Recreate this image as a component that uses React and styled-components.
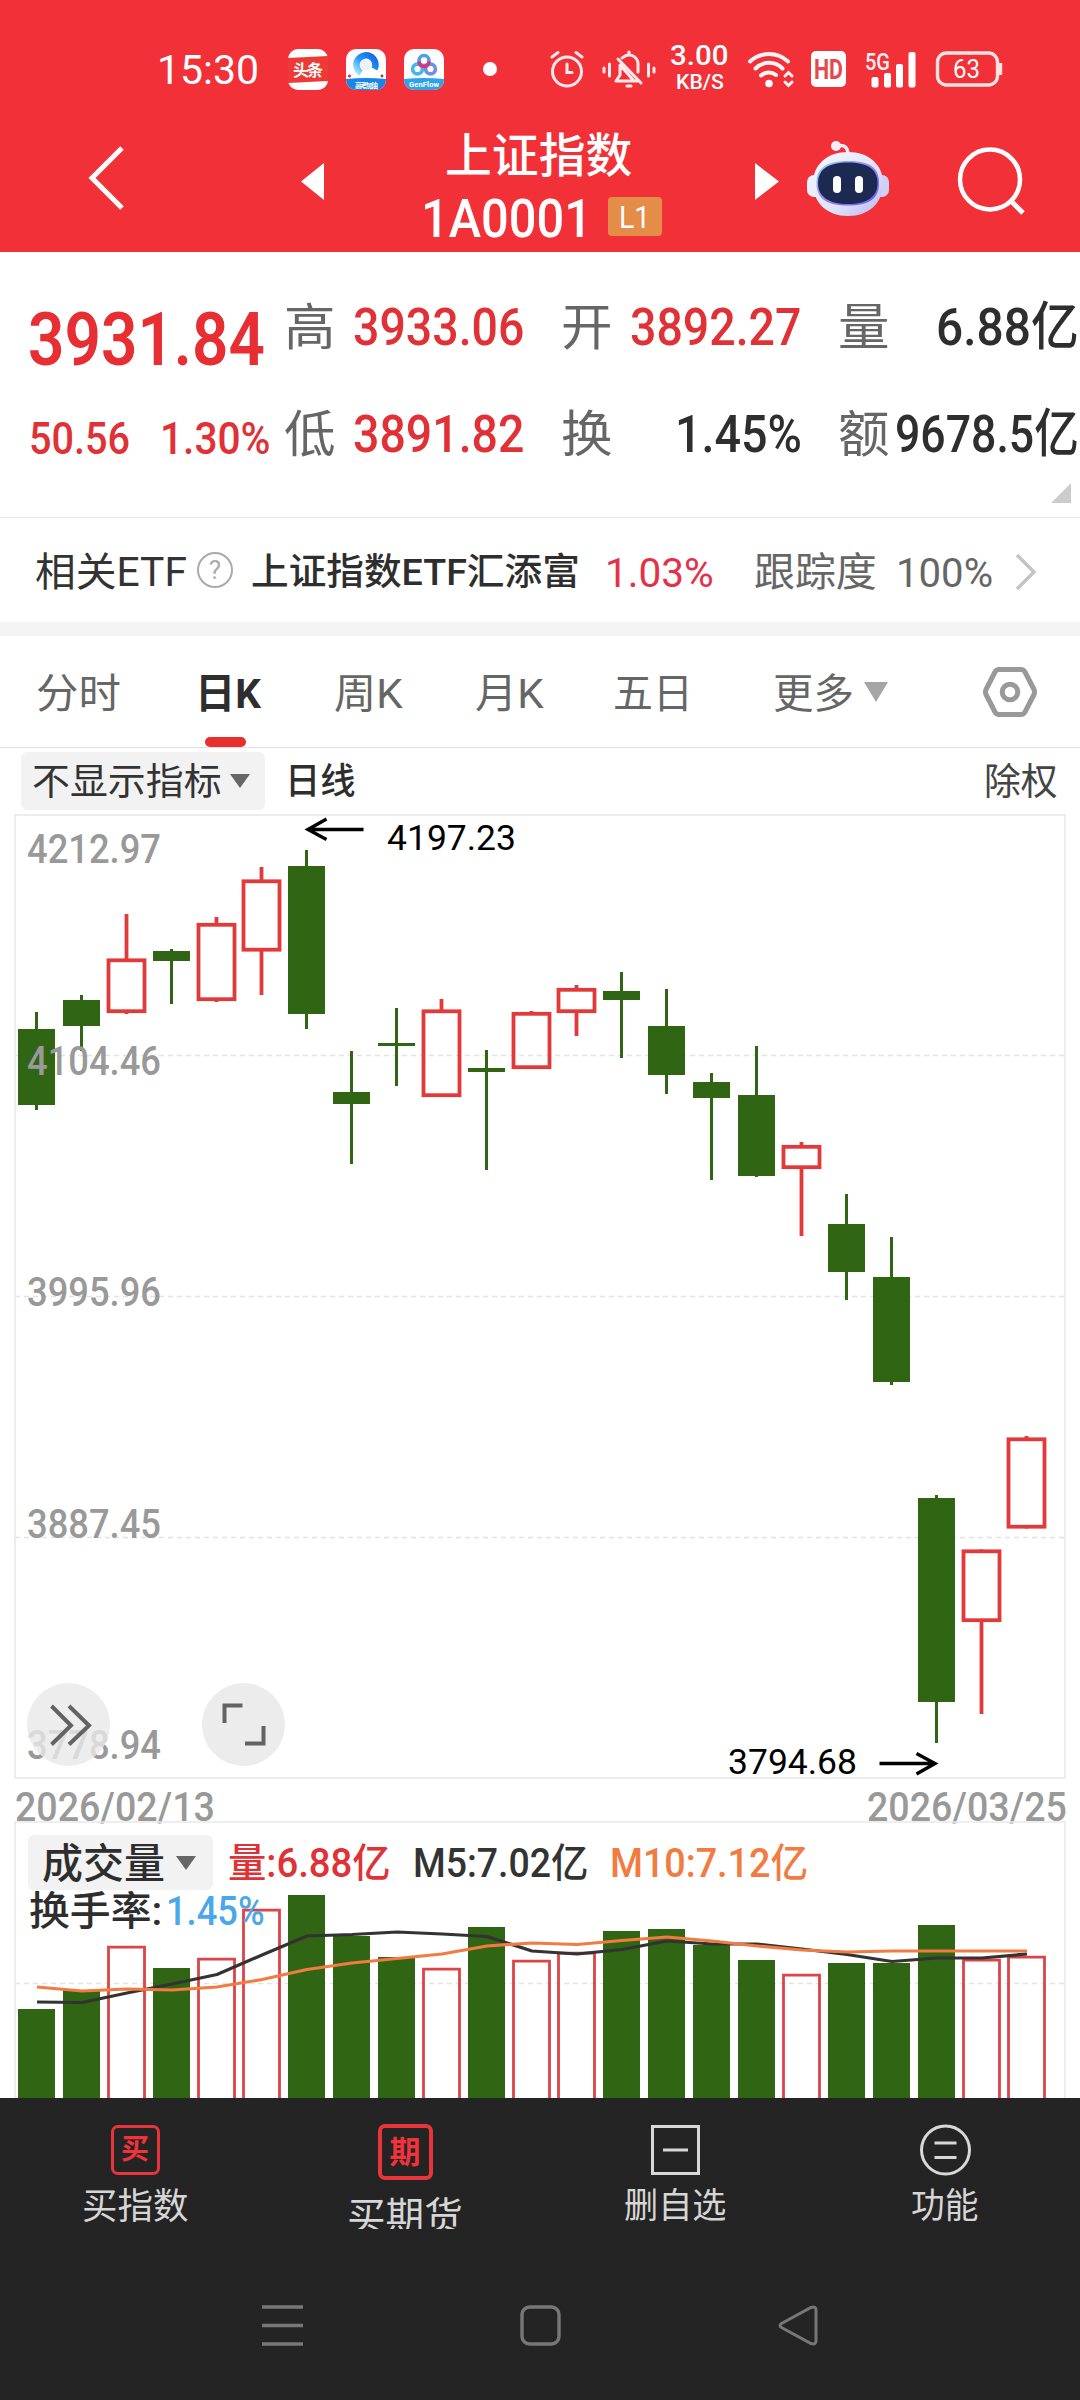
import { useLayoutEffect, useRef, useState } from 'react'
import styled, { createGlobalStyle } from 'styled-components'

const RED = '#e03236'
const GREEN = '#306613'
const FONT = `Roboto, "Noto Sans CJK SC", sans-serif`

const GlobalStyle = createGlobalStyle`
  * { box-sizing: border-box; }
  body {
    margin: 0;
    background: #fff;
    font-family: ${FONT};
  }
  svg { display: block; flex: none; overflow: visible; }
`

const Page = styled.div`
  width: 1080px;
  height: 2400px;
  display: flex;
  flex-direction: column;
  overflow: hidden;
  background: #fff;
`

// ---------- text that is squeezed to a given width ----------

const FitBox = styled.span`
  display: block;
  flex: none;
  width: ${p => p.$w}px;
  margin-left: ${p => p.$ml || 0}px;
  color: ${p => p.$color || 'inherit'};
  font-size: ${p => p.$size}px;
  font-weight: ${p => p.$weight || 400};
  line-height: 1;
  white-space: nowrap;
`

const FitInner = styled.span`
  display: inline-block;
  margin-left: -0.035em;
  padding-top: 0.08em;
  transform-origin: 0 50%;
`

const Fit = ({ w, size, ml, color, weight, children }) => {
    const ref = useRef(null)
    const [scale, setScale] = useState(1)

    useLayoutEffect(() => {
        setScale((w + size * 0.07) / ref.current.offsetWidth)
    }, [w, size, children])

    return (
        <FitBox $w={w} $size={size} $ml={ml} $color={color} $weight={weight}>
            <FitInner ref={ref} style={{ transform: `scaleX(${scale})` }}>{children}</FitInner>
        </FitBox>
    )
}

// ---------- header ----------

const Header = styled.header`
  height: 252px;
  background: #f23037;
  color: #fff;
`

const StatusBar = styled.div`
  display: flex;
  align-items: center;
  height: 120px;
  padding: 18px 0 0 158px;
`

const Slot = styled.div`
  flex: none;
  width: ${p => p.$w}px;
  margin-left: ${p => p.$ml || 0}px;
`

const Dot = styled.div`
  width: 14px;
  height: 14px;
  border-radius: 50%;
  background: #fff;
`

const Speed = styled.div`
  display: flex;
  flex-direction: column;
  margin-top: -4px;
`

const TitleBar = styled.div`
  display: flex;
  align-items: flex-start;
  height: 132px;
  padding-left: 88px;
`

const IconBox = styled.div`
  display: flex;
  align-items: center;
  height: ${p => p.$h || 116}px;
  margin-left: ${p => p.$ml || 0}px;
`

const TitleBlock = styled.div`
  width: 239px;
  margin-left: 99px;
  padding-top: 2px;
`

const TitleLine = styled.div`
  display: flex;
  align-items: center;
  height: 63px;
`

const LevelBadge = styled.div`
  display: flex;
  align-items: center;
  height: 39px;
  width: 54px;
  margin-left: 18px;
  padding-left: 12px;
  border-radius: 4px;
  background: #e38d48;
`

const NewsIcon = () => (
    <svg width="40" height="41" viewBox="0 0 40 41">
        <rect width="40" height="41" rx="10" fill="#fff" />
        <path d="M0 9L40 7V32L0 34Z" fill="#ee3a35" />
        <text x="5" y="27" fontSize="16" fontWeight="700" fill="#fff" textLength="30">头条</text>
    </svg>
)

const BrowserIcon = () => (
    <svg width="40" height="41" viewBox="0 0 40 41">
        <defs>
            <clipPath id="browser"><rect width="40" height="41" rx="10" /></clipPath>
            <linearGradient id="ring" x1="0" y1="1" x2="1" y2="0">
                <stop offset="0" stopColor="#a8e4ff" />
                <stop offset="0.5" stopColor="#2196f3" />
                <stop offset="1" stopColor="#1266e6" />
            </linearGradient>
        </defs>
        <g clipPath="url(#browser)">
            <rect width="40" height="41" fill="#fff" />
            <path d="M15 24A9.500 9.500 0 1 1 28.500 20" fill="none" stroke="url(#ring)" strokeWidth="6.500" />
            <circle cx="20" cy="16" r="5.500" fill="#eef1f5" />
            <circle cx="3.500" cy="27" r="1.600" fill="#d33" />
            <circle cx="36" cy="27" r="1.400" fill="#a33" />
            <path d="M0 30Q20 28 40 30V41H0Z" fill="#1a86e4" />
            <text x="9" y="38.500" fontSize="7" fontWeight="700" fill="#fff" textLength="23">高考加油</text>
        </g>
    </svg>
)

const CloudIcon = () => (
    <svg width="40" height="41" viewBox="0 0 40 41">
        <defs>
            <clipPath id="cloud"><rect width="40" height="41" rx="10" /></clipPath>
        </defs>
        <g clipPath="url(#cloud)">
            <rect width="40" height="41" fill="#fff" />
            <g fill="none" strokeWidth="3.600">
                <circle cx="13.500" cy="20" r="4.900" stroke="#43b7e8" />
                <circle cx="26.500" cy="20" r="4.900" stroke="#6f8fe6" />
                <circle cx="20" cy="11.500" r="5" stroke="#4f9fe6" />
                <path d="M15 12.500A5 5 0 0 0 25 12.500" stroke="#d9347e" />
            </g>
            <path d="M0 30Q20 28 40 30V41H0Z" fill="#2ea3ea" />
            <text x="5" y="38" fontSize="7.500" fontWeight="700" fill="#fff" textLength="30">GenFlow</text>
        </g>
    </svg>
)

const AlarmIcon = () => (
    <svg width="34" height="38" viewBox="0 0 34 38" fill="none" stroke="#ffe9e9" strokeWidth="3" strokeLinecap="round">
        <circle cx="17" cy="21.500" r="14.500" />
        <path d="M17 14V22.500H22M2 7L8 2.500M32 7L26 2.500" />
    </svg>
)

const MuteBellIcon = () => (
    <svg width="54" height="38" viewBox="0 0 54 38" fill="none" stroke="#ffe9e9" strokeWidth="3" strokeLinecap="round" strokeLinejoin="round">
        <path d="M2 18V22M7.500 14V26M52 18V22M46.500 14V26" />
        <path d="M14 31H37M14 31L18 25V15L32 31M20 8L24 5.500A9 9 0 0 1 36 14V22M16 9L39 33" />
        <path d="M27 3V2M25 36H29" strokeWidth="3.200" />
    </svg>
)

const WifiIcon = () => (
    <svg width="46" height="37" viewBox="0 0 46 37" fill="none" stroke="#fff5f5" strokeWidth="4" strokeLinecap="round">
        <path d="M2 10.500A28 28 0 0 1 40 10.500" />
        <path d="M7.500 17.500A19 19 0 0 1 34.500 17.500" />
        <path d="M13 24.500A11.500 11.500 0 0 1 28 24" />
        <circle cx="21" cy="32.500" r="3.800" fill="#fff" stroke="none" />
        <path d="M37 25L40.500 21.500L44 25M37 31L40.500 34.500L44 31" strokeWidth="3" />
    </svg>
)

const HdIcon = () => (
    <svg width="35" height="36" viewBox="0 0 35 36">
        <rect width="35" height="36" rx="5" fill="#fff" />
        <text x="3" y="27.500" fontSize="27" fontWeight="700" fill="#e8484c" textLength="29" lengthAdjust="spacingAndGlyphs">HD</text>
    </svg>
)

const SignalIcon = () => (
    <svg width="52" height="37" viewBox="0 0 52 37">
        <text x="0" y="19" fontSize="23" fontWeight="500" fill="#fff0f0" textLength="25" lengthAdjust="spacingAndGlyphs">5G</text>
        <g fill="#fff">
            <rect x="6.500" y="26" width="7" height="10.500" rx="2" />
            <rect x="19" y="22" width="7" height="14.500" rx="2" />
            <rect x="31" y="13" width="7" height="23.500" rx="2" />
            <rect x="43.500" y="1" width="7" height="35.500" rx="2" />
        </g>
    </svg>
)

const BatteryIcon = () => (
    <svg width="68" height="36" viewBox="0 0 68 36">
        <rect x="2.500" y="2" width="60" height="32" rx="9" fill="none" stroke="#ffe3e3" strokeWidth="3.400" />
        <path d="M65.500 12V24" stroke="#ffe3e3" strokeWidth="3.400" />
        <text x="18" y="26.500" fontSize="25" fill="#fff" textLength="27" lengthAdjust="spacingAndGlyphs">63</text>
    </svg>
)

const RobotIcon = () => (
    <svg width="82" height="77" viewBox="0 0 82 77">
        <defs>
            <linearGradient id="shell" x1="0" y1="0" x2="1" y2="1">
                <stop offset="0" stopColor="#f6f8ff" />
                <stop offset="0.6" stopColor="#dfe3fb" />
                <stop offset="1" stopColor="#b9b4ee" />
            </linearGradient>
            <linearGradient id="visor" x1="0" y1="0" x2="1" y2="1">
                <stop offset="0" stopColor="#7fdcf2" />
                <stop offset="0.5" stopColor="#9c7bf0" />
                <stop offset="1" stopColor="#5b63e8" />
            </linearGradient>
        </defs>
        <path d="M30 6C38 4 41 8 41 15" fill="none" stroke="#e9ebfa" strokeWidth="3.500" />
        <circle cx="29" cy="6" r="5" fill="#f1eefa" />
        <rect x="0" y="35" width="16" height="22" rx="7" fill="#eceffd" />
        <rect x="66" y="35" width="16" height="22" rx="7" fill="#cfd0f6" />
        <path d="M41 12C62 12 76 25 76 43C76 63 62 76 41 76S6 63 6 43C6 25 20 12 41 12Z" fill="url(#shell)" />
        <path d="M41 21C62 21 72 27 72 43S62 65.500 41 65.500S9.500 59 9.500 43S21 21 41 21Z" fill="url(#visor)" />
        <path d="M41 22.500C60 22.500 70.500 29 70.500 43S60 64 41 64S11 57 11 43S22 22.500 41 22.500Z" fill="#1c2a52" />
        <rect x="26" y="36" width="8" height="17" rx="4" fill="#fff" />
        <rect x="48" y="36" width="8" height="17" rx="4" fill="#fff" />
    </svg>
)

const StockHeader = () => (
    <Header>
        <StatusBar>
            <Fit w={99} size={41}>15:30</Fit>
            <Slot $w={40} $ml={31}><NewsIcon /></Slot>
            <Slot $w={40} $ml={18}><BrowserIcon /></Slot>
            <Slot $w={40} $ml={18}><CloudIcon /></Slot>
            <Slot $w={14} $ml={39}><Dot /></Slot>
            <Slot $w={34} $ml={53}><AlarmIcon /></Slot>
            <Slot $w={54} $ml={18}><MuteBellIcon /></Slot>
            <Slot $w={57} $ml={15}>
                <Speed>
                    <Fit w={57} size={27} weight={500}>3.00</Fit>
                    <Fit w={46} size={21} ml={6} weight={500}>KB/S</Fit>
                </Speed>
            </Slot>
            <Slot $w={46} $ml={20}><WifiIcon /></Slot>
            <Slot $w={35} $ml={17}><HdIcon /></Slot>
            <Slot $w={52} $ml={19}><SignalIcon /></Slot>
            <Slot $w={68} $ml={18}><BatteryIcon /></Slot>
        </StatusBar>
        <TitleBar>
            <IconBox>
                <svg width="36" height="64" viewBox="0 0 36 64" fill="none" stroke="#fff" strokeWidth="5">
                    <path d="M34 2L4 32L34 62" />
                </svg>
            </IconBox>
            <IconBox $ml={177} $h={122}>
                <svg width="23" height="37" viewBox="0 0 23 37" fill="#fff"><path d="M23 0V37L0 18.500Z" /></svg>
            </IconBox>
            <TitleBlock>
                <TitleLine>
                    <Fit w={184} size={47} ml={24} weight={500}>上证指数</Fit>
                </TitleLine>
                <TitleLine>
                    <Fit w={167} size={54} weight={500}>1A0001</Fit>
                    <LevelBadge><Fit w={29} size={31}>L1</Fit></LevelBadge>
                </TitleLine>
            </TitleBlock>
            <IconBox $ml={93} $h={122}>
                <svg width="24" height="37" viewBox="0 0 24 37" fill="#fff"><path d="M0 0V37L24 18.500Z" /></svg>
            </IconBox>
            <IconBox $ml={28} $h={117}><RobotIcon /></IconBox>
            <IconBox $ml={69} $h={120}>
                <svg width="67" height="67" viewBox="0 0 67 67" fill="none" stroke="#fff" strokeWidth="4.500">
                    <circle cx="32" cy="32.500" r="30" />
                    <path d="M53 54L65 66" strokeWidth="5" />
                </svg>
            </IconBox>
        </TitleBar>
    </Header>
)

// ---------- quote figures ----------

const Quotes = styled.section`
  position: relative;
  display: flex;
  height: 266px;
  border-bottom: 1px solid #e6e6e6;
`

const PriceCol = styled.div`
  width: 286px;
  padding: 45px 0 0 31px;
`

const PriceLine = styled.div`
  display: flex;
  align-items: center;
  height: ${p => p.$h}px;
  margin-top: ${p => p.$mt || 0}px;
`

const QuoteGrid = styled.div`
  display: grid;
  grid-template-columns: repeat(3, 237px);
  grid-auto-rows: 60px;
  gap: 47px 40px;
  padding-top: 44px;
`

const Pair = styled.div`
  display: flex;
  align-items: center;
  justify-content: space-between;
`

const Corner = styled.div`
  position: absolute;
  right: 9px;
  bottom: 14px;
  border-left: 20px solid transparent;
  border-bottom: 20px solid #ccc;
`

const quotes = [
    { label: '高', value: '3933.06', w: 168, color: RED },
    { label: '开', value: '3892.27', w: 168, color: RED },
    { label: '量', value: '6.88亿', w: 139, color: '#2e2e2e' },
    { label: '低', value: '3891.82', w: 168, color: RED },
    { label: '换', value: '1.45%', w: 123, color: '#2e2e2e' },
    { label: '额', value: '9678.5亿', w: 180, color: '#2e2e2e' },
]

const QuotePanel = () => (
    <Quotes>
        <PriceCol>
            <PriceLine $h={81}><Fit w={232} size={74} weight={600} color="#e62e33">3931.84</Fit></PriceLine>
            <PriceLine $h={60} $mt={29}>
                <Fit w={98} size={45} weight={500} color={RED}>50.56</Fit>
                <Fit w={107} size={45} ml={33} weight={500} color={RED}>1.30%</Fit>
            </PriceLine>
        </PriceCol>
        <QuoteGrid>
            {quotes.map((q) => (
                <Pair key={q.label}>
                    <Fit w={48} size={50} color="#666">{q.label}</Fit>
                    <Fit w={q.w} size={52} weight={500} color={q.color}>{q.value}</Fit>
                </Pair>
            ))}
        </QuoteGrid>
        <Corner />
    </Quotes>
)

// ---------- related ETF ----------

const EtfRow = styled.section`
  display: flex;
  align-items: center;
  height: 118px;
  padding-left: 36px;
  padding-top: 3px;
  border-bottom: 14px solid #f4f4f4;
`

const Help = styled.div`
  display: flex;
  align-items: center;
  justify-content: center;
  width: 36px;
  height: 36px;
  margin: -4px 0 0 12px;
  border: 2px solid #aaa;
  border-radius: 50%;
  color: #aaa;
  font-size: 26px;
  line-height: 1;
`

const Chevron = styled.svg`
  margin-left: 24px;
`

const RelatedEtf = () => (
    <EtfRow>
        <Fit w={149} size={40} color="#333">相关ETF</Fit>
        <Help>?</Help>
        <Fit w={326} size={37} ml={19} weight={500} color="#2e2e2e">上证指数ETF汇添富</Fit>
        <Fit w={106} size={41} ml={28} color="#e5304a">1.03%</Fit>
        <Fit w={120} size={40} ml={43} color="#666">跟踪度</Fit>
        <Fit w={94} size={41} ml={22} color="#666">100%</Fit>
        <Chevron width="22" height="38" viewBox="0 0 22 38" fill="none" stroke="#c4c4c4" strokeWidth="3.500">
            <path d="M2 2L19 19L2 36" />
        </Chevron>
    </EtfRow>
)

// ---------- period tabs ----------

const Tabs = styled.nav`
  display: flex;
  align-items: center;
  height: 112px;
  padding-left: 37px;
  border-bottom: 1px solid #e2e2e2;
`

const Tab = styled.div`
  position: relative;
  display: flex;
  align-items: center;
  height: 111px;
  margin-left: ${p => p.$ml || 0}px;
  padding-top: 3px;
`

const ActiveLine = styled.div`
  position: absolute;
  bottom: 0;
  left: 9px;
  width: 41px;
  height: 10px;
  border-radius: 5px;
  background: #ea2d2f;
`

const Caret = styled.div`
  flex: none;
  margin: ${p => p.$m};
  border-left: ${p => p.$w / 2}px solid transparent;
  border-right: ${p => p.$w / 2}px solid transparent;
  border-top: ${p => p.$h}px solid ${p => p.$color};
`

const Gear = styled.svg`
  margin-left: 95px;
`

const periods = [
    { name: '分时', w: 82, ml: 0 },
    { name: '日K', w: 63, ml: 77, active: true },
    { name: '周K', w: 66, ml: 76 },
    { name: '月K', w: 66, ml: 75 },
    { name: '五日', w: 77, ml: 72 },
    { name: '更多', w: 78, ml: 83 },
]

const PeriodTabs = () => (
    <Tabs>
        {periods.map((t) => (
            <Tab key={t.name} $ml={t.ml}>
                <Fit w={t.w} size={41} weight={t.active ? 700 : 400} color={t.active ? '#2e2e2e' : '#666'}>{t.name}</Fit>
                {t.active ? <ActiveLine /> : null}
            </Tab>
        ))}
        <Caret $w={25} $h={20} $color="#a6a6a6" $m="0 0 0 12px" />
        <Gear width="54" height="50" viewBox="0 0 54 50" fill="none" stroke="#999" strokeWidth="5" strokeLinejoin="round">
            <path d="M16 2.500H38Q40.500 2.500 42 5L51 22.500Q52 25 51 27.500L42 45Q40.500 47.500 38 47.500H16Q13.500 47.500 12 45L3 27.500Q2 25 3 22.500L12 5Q13.500 2.500 16 2.500Z" />
            <circle cx="27" cy="25" r="7.800" />
        </Gear>
    </Tabs>
)

// ---------- price chart ----------

const IndicatorRow = styled.div`
  display: flex;
  align-items: center;
  height: 66px;
  padding-left: 21px;
`

const Picker = styled.div`
  display: flex;
  align-items: center;
  width: ${p => p.$w}px;
  height: ${p => p.$h}px;
  padding-left: ${p => p.$pl}px;
  border-radius: 6px;
  background: #f2f2f2;
`

const DateRow = styled.div`
  display: flex;
  align-items: center;
  justify-content: space-between;
  height: 42px;
  padding: 13px 15px 0 16px;
`

const STEP = 45
const FIRST_X = 36.5
const centerX = (i) => FIRST_X + i * STEP

// up, wick top, wick bottom, body top, body bottom
const candles = [
    [0, 1012, 1110, 1029, 1105],
    [0, 995, 1051, 1000, 1026],
    [1, 914, 1014, 958.5, 1013],
    [0, 949, 1004, 951, 961],
    [1, 917, 1002, 923, 1001],
    [1, 867, 995, 879.5, 951.5],
    [0, 850, 1029, 866, 1014],
    [0, 1051, 1164, 1092, 1104],
    [0, 1008, 1086, 1043, 1046],
    [1, 999, 1097, 1009.5, 1097],
    [0, 1050, 1170, 1068, 1072],
    [1, 1011, 1069, 1012, 1069],
    [1, 985, 1036, 988, 1013],
    [0, 972, 1058, 991, 1000],
    [0, 989, 1094, 1026, 1075],
    [0, 1073, 1180, 1082, 1098],
    [0, 1046, 1177, 1095, 1176],
    [1, 1142, 1236, 1145, 1169],
    [0, 1194, 1300, 1224, 1272],
    [0, 1237, 1385, 1277, 1382],
    [0, 1495, 1743, 1498, 1702],
    [1, 1549.5, 1714, 1549.5, 1622],
    [1, 1436, 1528.5, 1437.5, 1528.5],
]

const Candle = ({ i, data }) => {
    const [up, high, low, top, bottom] = data
    const x = centerX(i)
    if (up)
        return (
            <g stroke="#e03a3b">
                <path d={`M${x} ${high}V${top + 1}M${x} ${bottom - 1}V${low}`} strokeWidth="3.800" />
                <rect x={x - 18} y={top + 1.8} width="36" height={bottom - top - 3.6} fill="none" strokeWidth="3.800" />
            </g>
        )
    return (
        <g fill={GREEN}>
            <rect x={x - 1.5} y={high} width="3" height={low - high} />
            <rect x={x - 18.5} y={top} width="37" height={bottom - top} />
        </g>
    )
}

const scaleLabels = [
    ['4212.97', 863],
    ['4104.46', 1074.5],
    ['3995.96', 1306],
    ['3887.45', 1538],
    ['3778.94', 1759],
]

const PriceChart = () => (
    <svg width="1080" height="965" viewBox="0 814 1080 965">
        <path d="M15 1055.500H1065M15 1296.500H1065M15 1537.500H1065" stroke="#e2e2e2" strokeWidth="1.300" strokeDasharray="5 4" />
        <rect x="15" y="815" width="1050" height="963" fill="none" stroke="#e9e9e9" strokeWidth="1.600" />
        {candles.map((c, i) => <Candle key={i} i={i} data={c} />)}
        <g fontSize="40" fontWeight="500" fill="#999">
            {scaleLabels.map(([value, y]) => (
                <text key={value} x="27" y={y} textLength="134" lengthAdjust="spacingAndGlyphs">{value}</text>
            ))}
        </g>
        <g fontSize="35.500" fill="#000">
            <text x="387" y="850" textLength="129" lengthAdjust="spacingAndGlyphs">4197.23</text>
            <text x="728" y="1774" textLength="129" lengthAdjust="spacingAndGlyphs">3794.68</text>
        </g>
        <g fill="none" stroke="#000" strokeWidth="3.400">
            <path d="M363.500 829.500H308M326.500 819L308 829.500L326.500 839.500" />
            <path d="M879.500 1763.500H935M916.500 1753.500L935 1763.500L916.500 1774" />
        </g>
        <circle cx="68.500" cy="1724.500" r="41.500" fill="#e8e8e8" fillOpacity="0.8" />
        <circle cx="243.500" cy="1724.500" r="41.500" fill="#ececec" />
        <g fill="none" stroke="#636363" strokeWidth="4">
            <path d="M51.500 1706L71 1725.500L51.500 1744.500M69 1706L89 1725.500L69 1744.500" />
            <path d="M224.500 1723V1705.500H242.500M245 1743.500H263.500V1726" />
        </g>
    </svg>
)

// ---------- volume chart ----------

const VolumeWrap = styled.section`
  position: relative;
  height: 277px;
`

const VolumeLegend = styled.div`
  position: absolute;
  top: 14px;
  left: 28px;
`

const LegendRow = styled.div`
  display: flex;
  align-items: center;
  height: ${p => p.$h}px;
`

// up, top of the bar
const volumes = [
    [0, 2009], [0, 1990], [1, 1946], [0, 1968], [1, 1958], [1, 1909],
    [0, 1895], [0, 1936], [0, 1957], [1, 1968], [0, 1927], [1, 1960],
    [1, 1952], [0, 1931], [0, 1929], [0, 1945], [0, 1960], [1, 1974],
    [0, 1963], [0, 1963], [0, 1925], [1, 1959], [1, 1956],
]

const ma5 = [2002, 2002.5, 1993, 1984, 1974.5, 1955, 1936, 1934.5, 1932, 1934, 1936.5, 1951, 1954, 1949.5, 1941, 1944, 1944, 1949, 1954.5, 1961.5, 1958, 1958, 1954]
const ma10 = [1987, 1991, 1989, 1990, 1987, 1979.5, 1969.5, 1963, 1958.5, 1954, 1946, 1943, 1944.5, 1940.5, 1937, 1941, 1946, 1950, 1952, 1951, 1951, 1951, 1951]

const toPoints = (list) => list.map((y, i) => `${centerX(i) + 0.5},${y}`).join(' ')

const VolumeChart = () => (
    <svg width="1080" height="277" viewBox="0 1821 1080 277">
        <path d="M15 1983.500H1065" stroke="#e2e2e2" strokeWidth="1.300" strokeDasharray="5 4" />
        <path d="M15 2098V1822H1065V2098" fill="none" stroke="#e9e9e9" strokeWidth="1.600" />
        {volumes.map(([up, y], i) => up
            ? <path key={i} d={`M${centerX(i) - 18} 2098V${y + 1.2}H${centerX(i) + 18}V2098`} fill="none" stroke="#dc4448" strokeWidth="2.800" />
            : <rect key={i} x={centerX(i) - 18.5} y={y} width="37" height={2098 - y} fill={GREEN} />
        )}
        <g fill="none" strokeWidth="3.200" strokeLinejoin="round">
            <polyline points={toPoints(ma5)} stroke="#333" />
            <polyline points={toPoints(ma10)} stroke="#f27b42" />
        </g>
    </svg>
)

// ---------- bottom bars ----------

const Footer = styled.footer`
  height: 302px;
  background: #242424;
`

const Actions = styled.div`
  display: grid;
  grid-template-columns: repeat(4, 270px);
  height: 131px;
  overflow: hidden;
`

const Action = styled.div`
  display: flex;
  flex-direction: column;
  align-items: center;
  gap: ${p => p.$gap || 11}px;
  padding-top: ${p => p.$pt || 27}px;
  color: #d6d6d6;
`

const Stamp = styled.div`
  display: flex;
  flex: none;
  align-items: center;
  justify-content: center;
  width: ${p => p.$s}px;
  height: ${p => p.$s + 1}px;
  border: ${p => p.$b}px solid #e8343b;
  border-radius: 7px;
  color: #f0333c;
  font-size: ${p => p.$f}px;
  font-weight: 700;
  line-height: 1;
`

const SystemNav = styled.div`
  display: flex;
  align-items: center;
  height: 171px;
  padding: 22px 0 0 262px;
`

const NavIcon = styled.svg`
  margin-left: ${p => p.$ml || 0}px;
`

const BottomBar = () => (
    <Footer>
        <Actions>
            <Action>
                <Stamp $s={49} $b={3} $f={28}>买</Stamp>
                <Fit w={104} size={36}>买指数</Fit>
            </Action>
            <Action $pt={26} $gap={15}>
                <Stamp $s={55} $b={4} $f={31}>期</Stamp>
                <Fit w={113} size={39}>买期货</Fit>
            </Action>
            <Action>
                <svg width="49" height="50" viewBox="0 0 49 50" fill="none" stroke="#d8d8d8" strokeWidth="3">
                    <path d="M1.500 1.500H47.500V48.500H1.500ZM12 25H37" />
                </svg>
                <Fit w={100} size={35}>删自选</Fit>
            </Action>
            <Action>
                <svg width="51" height="50" viewBox="0 0 51 50" fill="none" stroke="#d8d8d8" strokeWidth="3">
                    <circle cx="25.500" cy="25" r="24" />
                    <path d="M14.500 18H36.500M14.500 32.500H36.500" />
                </svg>
                <Fit w={65} size={35}>功能</Fit>
            </Action>
        </Actions>
        <SystemNav>
            <NavIcon width="41" height="41" viewBox="0 0 41 41" stroke="#777" strokeWidth="3.600">
                <path d="M0 2H41M0 20.500H41M0 39H41" />
            </NavIcon>
            <NavIcon $ml={217} width="41" height="41" viewBox="0 0 41 41" fill="none" stroke="#777" strokeWidth="3.400">
                <rect x="2" y="2" width="37" height="37" rx="7.500" />
            </NavIcon>
            <NavIcon $ml={217} width="40" height="41" viewBox="0 0 40 41" fill="none" stroke="#777" strokeWidth="3">
                <path d="M3.500 18.500L33 2.500Q38 1 38 5V36Q38 40 33 38.500L3.500 22.500Q0.500 20.500 3.500 18.500Z" />
            </NavIcon>
        </SystemNav>
    </Footer>
)

const App = () => {
    return (
        <Page>
            <GlobalStyle />
            <StockHeader />
            <QuotePanel />
            <RelatedEtf />
            <PeriodTabs />
            <IndicatorRow>
                <Picker $w={244} $h={58} $pl={12}>
                    <Fit w={187} size={37} color="#333">不显示指标</Fit>
                    <Caret $w={20} $h={14} $color="#666" $m="0 0 0 10px" />
                </Picker>
                <Fit w={68} size={36} ml={21} weight={500} color="#2e2e2e">日线</Fit>
                <Fit w={71} size={37} ml={631} color="#444">除权</Fit>
            </IndicatorRow>
            <PriceChart />
            <DateRow>
                <Fit w={197} size={40} weight={500} color="#999">2026/02/13</Fit>
                <Fit w={197} size={40} weight={500} color="#999">2026/03/25</Fit>
            </DateRow>
            <VolumeWrap>
                <VolumeChart />
                <VolumeLegend>
                    <LegendRow $h={55}>
                        <Picker $w={185} $h={55} $pl={15}>
                            <Fit w={120} size={41} color="#2e2e2e" weight={500}>成交量</Fit>
                            <Caret $w={20} $h={14} $color="#666" $m="0 0 0 13px" />
                        </Picker>
                        <Fit w={160} size={40} ml={16} weight={500} color={RED}>量:6.88亿</Fit>
                        <Fit w={173} size={40} ml={25} weight={500} color="#333">M5:7.02亿</Fit>
                        <Fit w={195} size={40} ml={24} weight={500} color="#f27b42">M10:7.12亿</Fit>
                    </LegendRow>
                    <LegendRow $h={40}>
                        <Fit w={131} size={40} ml={2} weight={500} color="#2e2e2e">换手率:</Fit>
                        <Fit w={96} size={40} ml={6} weight={500} color="#4aa8ea">1.45%</Fit>
                    </LegendRow>
                </VolumeLegend>
            </VolumeWrap>
            <BottomBar />
        </Page>
    )
}

export default App
